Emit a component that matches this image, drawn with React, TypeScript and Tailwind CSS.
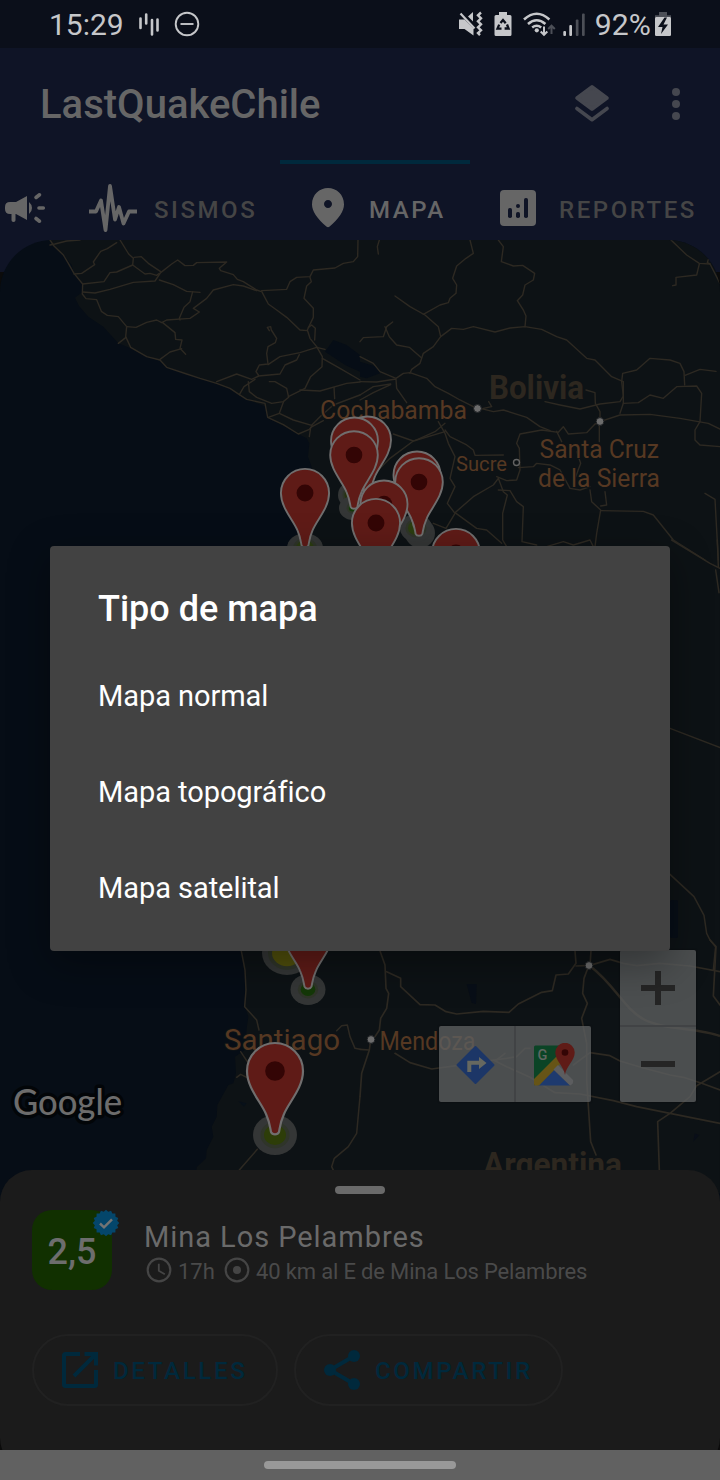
import React from "react";

const ROADS_NW = [
  "150 45 165 42 200 33 240 30",
  "150 30 162 48 190 75 205 100 222 130 248 162 247 192 258 206 290 209 304 244 322 256 355 260 380 290 377 320 392 352 440 380 480 390 500 412 560 432 600 445 650 460 690 475 718 494 740 508 795 520 803 562 850 584 895 612 928 598 937 588",
  "222 132 245 130 284 104 280 96 302 64 322 56 350 38",
  "248 162 312 155 330 128 350 126 398 105 400 85 386 72 360 30",
  "398 105 435 132 450 130 470 136 478 130",
  "402 82 424 80 445 100 482 125",
  "248 186 285 189 330 178 400 157 465 153 482 128 515 102 533 90 555 107 580 106 590 98 680 96 658 115 662 122 700 134 712 148 730 155 770 180 782 184",
  "478 150 520 164 560 184 600 187",
  "578 185 570 215 552 232 538 265 540 270",
  "380 290 408 292 440 277 470 270 485 278 500 270 570 265 598 246 580 235 620 205 640 180 700 164 730 168 770 182",
  "488 278 525 308 527 328 546 330 540 355 557 373",
  "480 388 510 366 545 356",
  "355 340 378 322",
  "785 184 805 222 830 240 860 262 900 300 922 302",
  "785 182 860 178 870 155 890 142 930 140 940 120 1005 114 1030 100 1060 95 1073 80 1074 30",
  "930 142 934 155 920 168 912 205 940 235 940 262 922 300 930 325 950 350 967 380 966 410 932 440 915 475 865 500",
  "925 292 935 285 946 295 944 330",
  "808 302 802 292 812 290 814 300 830 325 826 338 804 350 800 370 804 402 778 405 768 425 776 436",
  "804 404 840 380 900 368 950 352 975 358",
  "775 438 840 432 855 405 890 390 898 374",
  "650 455 710 432 755 448 776 438",
  "718 494 732 470 765 448",
  "745 455 748 485 770 502 815 520 850 515 866 502 860 475 825 455 808 455",
  "850 517 838 550 805 562",
  "838 550 880 570 935 586 960 560 1000 525 1080 495",
  "900 480 960 483 1040 460 1080 456",
  "1002 472 1004 506",
  "967 385 1020 415 1080 450",
  "928 620 932 592 970 572",
];

const ROADS_NE = [
  "58 30 52 50 55 72",
  "330 30 340 70 318 85 290 108 278 145 290 165 288 190 270 205 265 218 240 225 190 253",
  "415 30 430 50 424 95 460 108 488 106 524 130 520 150 495 165 488 195 472 212 490 240 498 258 495 290",
  "105 198 150 230 195 255 235 290 242 320",
  "0 335 10 323 70 320 80 290 98 276",
  "75 290 88 320 110 345 148 352 184 383",
  "150 430 155 418 180 400 190 370 220 350 242 320 275 295 310 298 340 290 405 306 450 294 495 290 545 298 590 320 620 330 680 385 705 390 755 440 790 455",
  "0 380 40 400 60 425 108 445 130 430 150 428 200 445 225 470 265 490 300 510 340 530",
  "0 455 50 456 108 447 110 475 140 518",
  "0 495 40 470 92 462",
  "0 510 40 488 92 464",
  "340 530 400 545 430 540 500 562 540 590 570 602",
  "386 515 395 530 370 535",
  "678 480 705 488 706 520 720 545 720 565",
  "555 515 600 525 660 537 720 522 780 515 790 498 785 455 788 430 830 420 870 385 930 390 960 400 972 425 974 465",
  "975 436 1020 418 1068 424",
  "790 520 835 518 870 495 910 505 950 470 1010 468 1025 490 1020 575 1005 600 1005 630 1020 645 1080 650",
  "720 575 780 555 870 553 960 565 1015 575 1045 580 1080 597",
  "790 455 790 520 780 550",
  "720 578 705 582 680 608 625 612 610 590 595 607 545 600 480 612 470 640 478 655 480 720 470 750 440 752 410 740",
  "475 713 520 710 530 700 570 705 600 720 630 775 660 780 690 770",
  "718 585 718 635",
  "590 604 605 635",
  "255 600 270 620 320 645 340 660 345 676 430 675",
  "255 605 160 633 90 685 55 720",
  "100 612 160 633",
  "235 575 255 610 265 640 285 680 270 745 285 770 262 820 285 850 258 895 220 880",
  "255 580 225 605 165 632",
  "285 848 340 800 400 765 415 745 430 785 442 795 428 850 428 930 440 950",
  "285 848 350 895 380 900 425 940",
  "415 780 450 782 470 815 490 830 486 935 530 945",
  "640 760 662 700 650 665",
  "690 780 695 815 722 840 710 910 705 950",
  "735 785 740 825 722 828",
  "722 842 850 844 880 855 940 930 1035 990",
  "1035 790 1065 808 1075 990",
  "933 30 980 75 1018 100 1050 102 1080 160",
  "1018 102 1010 135 948 142 948 165 938 167",
  "1050 102 1042 98 1046 85",
  "560 950 610 935 640 945 690 930 700 950",
];

const ROADS_SW = [
  "724 33 735 90 738 150 734 200 770 240 777 270",
  "722 335 742 365",
  "710 412 722 403 740 412",
  "1010 272 1025 257 1042 255 1050 290 1065 325 1080 328",
  "1080 470 1070 580 1045 620 1003 655 995 680 1002 695",
  "718 690 772 628",
];

const ROADS_SE = [
  "60 33 75 75 78 145 86 160 80 205 62 235 58 270 45 290",
  "80 95 122 115 122 140 180 194 225 195 258 215 290 222 370 214 447 217 475 192 545 157 577 152 588 105 625 102 648 70 645 33",
  "648 78 690 76 693 33",
  "687 75 672 115 668 160 682 190 665 235 680 310 680 420 692 605 708 645",
  "690 76 750 58 790 70 830 77 900 70 990 78 1080 95",
  "0 328 28 330 5 400 0 470",
  "28 330 32 300",
  "105 340 150 368 215 387 290 377 400 360 440 355 470 350 495 325 510 325",
  "400 360 440 380 510 412 585 458 660 462 760 482 830 500 930 520 1080 550",
  "410 360 435 340",
  "640 375 690 338 750 347 780 363 850 384 930 405 970 412 1025 430 1080 450",
  "1080 395 1010 437 990 470 930 520 893 545 898 690",
  "1050 0 1068 20 1060 168 1080 195",
];

const ROADS_EAST = [
  "65 0 180 70 210 85",
  "202 0 205 80",
  "197 90 207 158",
  "60 565 210 623",
  "60 1003 132 1070 162 1126 170 1180 180 1200 197 1220 190 1290",
];

const WATER_N = [
  "975 365 1000 330 1040 345 1080 375 1080 425 1035 405 1005 385",
  "1080 395 1130 410 1140 430 1100 445 1080 440",
];

interface PinData {
  x: number;
  y: number;
  s: number;
}

const PINS: PinData[] = [
  { x: 305, y: 493, s: 0.86 },
  { x: 367.5, y: 440, s: 0.84 },
  { x: 354.5, y: 441, s: 0.84 },
  { x: 354, y: 455, s: 0.85 },
  { x: 417, y: 475, s: 0.84 },
  { x: 419, y: 482, s: 0.85 },
  { x: 384, y: 504, s: 0.84 },
  { x: 376, y: 523, s: 0.86 },
  { x: 456, y: 553, s: 0.86 },
  { x: 308, y: 933, s: 0.88 },
  { x: 275, y: 1071, s: 1 },
];

function Roads({ lines, x, y, width = 4.2 }: { lines: string[]; x: number; y: number; width?: number }) {
  return (
    <g transform={`translate(${x} ${y}) scale(0.33333)`} fill="none" stroke="#2d2922" strokeWidth={width} strokeLinejoin="round" strokeLinecap="round">
      {lines.map((p) => (
        <polyline key={p} points={p} />
      ))}
    </g>
  );
}

function Halo({ x, y, rx, ry, core, k = 0.5 }: { x: number; y: number; rx: number; ry: number; core: string; k?: number }) {
  return (
    <g>
      <ellipse cx={x} cy={y} rx={rx} ry={ry} fill="#343636" />
      <ellipse cx={x} cy={y} rx={rx * (k + 0.16)} ry={ry * (k + 0.16)} fill="#2f3529" />
      <ellipse cx={x} cy={y} rx={rx * k} ry={ry * k} fill={core} />
    </g>
  );
}

function Pin({ x, y, s }: PinData) {
  return (
    <g transform={`translate(${x} ${y}) scale(${s})`}>
      <path
        d="M-28 0A28 28 0 0 1 28 0C28 17 14 31 9 43C5 52 5 56 4 61Q3 63.3 0 63.3Q-3 63.3 -4 61C-5 56 -5 52 -9 43C-14 31 -28 17 -28 0Z"
        fill="#5f1b17"
        stroke="#706e6e"
        strokeWidth="2.200"
      />
      <circle r="9.8" fill="#330505" />
    </g>
  );
}

function CityDot({ x, y }: { x: number; y: number }) {
  return <circle cx={x} cy={y} r="3.9" fill="#6c6c6c" stroke="#1d2023" strokeWidth="1" />;
}

function MapCanvas() {
  return (
    <svg className="block h-[1210px] w-[720px]" viewBox="0 240 720 1210" fontFamily="Roboto, 'Liberation Sans', sans-serif">
      <rect y="240" width="720" height="1210" fill="#060d16" />
      <g transform="translate(0 230) scale(0.33333)" fill="#0d1215">
        <polygon points="150,30 165,55 190,75 215,105 222,130 248,160 248,185 225,203 237,228 265,260 310,290 355,340 390,354 440,380 480,392 505,414 570,434 650,462 690,477 720,497 750,512 798,530 805,565 850,588 895,613 920,625 928,640 924,680 935,710 930,760 940,2160 2160,2160 2160,30" />
        <g fill="#060d16">
          {WATER_N.map((p) => (
            <polygon key={p} points={p} />
          ))}
        </g>
      </g>
      <g transform="translate(0 940) scale(0.33333)" fill="#0d1215">
        <polygon points="722,0 735,100 735,200 745,230 740,265 735,330 705,350 708,400 700,430 685,435 652,495 650,530 635,560 640,590 620,630 618,655 590,682 585,760 2160,760 2160,0" />
        <polygon points="715,484 740,490 732,500" fill="#081019" />
        <polygon points="1400,132 1430,132 1428,192 1415,188" fill="#080e17" />
        <polygon points="2084,580 2098,585 2080,605" fill="#090e18" />
      </g>
      <rect x="670" y="900" width="8" height="38" rx="2" fill="#070e17" />
      <Roads lines={ROADS_NW} x={0} y={230} />
      <Roads lines={ROADS_NE} x={360} y={230} />
      <Roads lines={ROADS_SW} x={0} y={940} width={4.5} />
      <Roads lines={ROADS_SE} x={360} y={940} width={5} />
      <Roads lines={ROADS_EAST} x={650} y={540} width={4.5} />
      <path d="M590 966C615 985 625 1010 645 1020S700 1028 720 1036" fill="none" stroke="#2d2922" strokeWidth="2.500" />

      <g fill="#563822" stroke="#0d1215" strokeWidth="2" paintOrder="stroke">
        <text x="320" y="419" fontSize="26" textLength="147" lengthAdjust="spacingAndGlyphs">Cochabamba</text>
        <text x="456" y="471" fontSize="20.500" textLength="51" lengthAdjust="spacingAndGlyphs">Sucre</text>
        <text x="539.500" y="458" fontSize="26" textLength="119.500" lengthAdjust="spacingAndGlyphs">Santa Cruz</text>
        <text x="538" y="487" fontSize="26" textLength="122" lengthAdjust="spacingAndGlyphs">de la Sierra</text>
        <text x="224" y="1049.500" fontSize="30" textLength="116" lengthAdjust="spacingAndGlyphs">Santiago</text>
        <text x="379.500" y="1050" fontSize="25" textLength="96" lengthAdjust="spacingAndGlyphs">Mendoza</text>
      </g>
      <g fill="#2d271f" stroke="#0d1215" strokeWidth="2" paintOrder="stroke" fontWeight="700">
        <text x="489" y="399" fontSize="34" textLength="95" lengthAdjust="spacingAndGlyphs">Bolivia</text>
        <text x="483" y="1176" fontSize="34" textLength="139" lengthAdjust="spacingAndGlyphs">Argentina</text>
      </g>
      <CityDot x={477.5} y={408.5} />
      <CityDot x={600} y={421.5} />
      <CityDot x={589} y={965.5} />
      <CityDot x={371} y={1039.5} />
      <circle cx="516.500" cy="462.500" r="3" fill="#0d1215" stroke="#626262" strokeWidth="1.400" />

      <Halo x={305} y={548} rx={18} ry={15} core="#2b3d10" />
      <Halo x={351} y={495} rx={13} ry={13} core="#26340f" />
      <Halo x={353} y={508} rx={14} ry={12} core="#123a08" k={0.3} />
      <Halo x={420} y={533} rx={15} ry={15} core="#2b3d10" k={0.3} />
      <Halo x={416} y={528} rx={16} ry={14} core="#2b3d10" />
      <Halo x={287} y={953} rx={25} ry={22} core="#504f0b" k={0.6} />
      <Halo x={308} y={989.5} rx={17.5} ry={15.5} core="#143808" k={0.42} />
      <Halo x={275} y={1135} rx={22} ry={20} core="#2d3d08" />
      {PINS.map((p) => (
        <Pin key={`${p.x}-${p.y}`} {...p} />
      ))}

      <text
        x="13"
        y="1115"
        fontFamily="Lato, Roboto, sans-serif"
        fontSize="36"
        fontWeight="500"
        textLength="109"
        lengthAdjust="spacingAndGlyphs"
        fill="#6c6c6c"
        stroke="#020508"
        strokeWidth="7"
        strokeLinejoin="round"
        paintOrder="stroke"
      >
        Google
      </text>
    </svg>
  );
}

function StatusBar() {
  return (
    <div className="flex h-12 items-center bg-[#0b0f1a] pl-[49px] pr-[48px] text-[#c6c7ca]">
      <span className="w-[75px] whitespace-nowrap pt-px text-[30px] leading-none">15:29</span>
      <svg className="ml-[14px] h-6 w-[22px]" viewBox="0 0 22 24" stroke="currentColor" strokeWidth="2.600" strokeLinecap="round">
        <path d="M2.500 6.500V16M8.200 2.500V11.500M14 8v14.500M19.500 7.500v11" />
      </svg>
      <svg className="ml-[14px] h-[26px] w-[26px]" viewBox="0 0 26 26" fill="none" stroke="currentColor" strokeWidth="1.900">
        <circle cx="13" cy="13" r="11.300" />
        <path d="M6.500 13h13" />
      </svg>
      <div className="flex-1" />
      <svg className="h-12 w-[222px] shrink-0" viewBox="450 0 222 48" fill="currentColor">
        <path d="M459 19.500h5.500l9 9v7l-9-6.500h-5.500Z" />
        <path d="M468 16.500l5-4.500v9.500Z" />
        <path d="M460.500 13.500l14 15" stroke="currentColor" strokeWidth="2.200" />
        <path d="M481 12.500l-3 2.800 3 3-3 3 3 3-3 3 3 3-3 2.800 2 2" fill="none" stroke="currentColor" strokeWidth="2.400" />
        <path d="M499 12h8v3h3q1.500 0 1.500 1.500v18q0 1.500-1.500 1.500h-14q-1.500 0-1.500-1.500v-18q0-1.500 1.500-1.500h3Z" />
        <g fill="none" stroke="#0b0f1a" strokeWidth="2.300">
          <path d="M500.500 23l2.500-3 2.700 3.300M507 24.500l1.600 4h-4M501.500 28.600h-4l1.700-4" />
        </g>
        <g fill="none" stroke="currentColor" strokeWidth="2.600">
          <path d="M524 19.500Q536.700 8 549.400 19.500" />
          <path d="M528 24Q536.700 16.500 545.400 24" />
          <path d="M532.200 27.500Q536.700 24 541.200 27.500" />
        </g>
        <circle cx="536.800" cy="30.300" r="2.100" />
        <path d="M544 26.500v8M540.700 31.500l3.300 3.300 3.300-3.300" fill="none" stroke="currentColor" strokeWidth="2" />
        <path d="M551.500 34v-8M548.200 29l3.300-3.300 3.300 3.300" fill="none" stroke="#4c4f57" strokeWidth="2" />
        <rect x="563.300" y="31" width="2.700" height="5" rx="1" />
        <rect x="569.300" y="25" width="2.700" height="11" rx="1" />
        <rect x="575.800" y="19.500" width="2.700" height="16.500" rx="1" fill="#4c4f57" />
        <rect x="582" y="13.500" width="2.700" height="22.500" rx="1" fill="#4c4f57" />
        <text x="594.800" y="34.500" fontSize="29.500" textLength="56" lengthAdjust="spacingAndGlyphs" fontFamily="Roboto, sans-serif">92%</text>
        <path d="M659 12h8v3.200h4v2h-16v-2h4Z" fill="#4c4f57" />
        <rect x="655" y="17" width="16" height="19" rx="1.200" />
        <path d="M664.500 17.500L658 27h4.500l-1.500 7 7-9.500h-4.500l3.500-7Z" fill="#0b0f1a" />
      </svg>
    </div>
  );
}

function AppBar() {
  return (
    <header className="flex h-28 items-center pl-10 pr-5">
      <h1 className="flex-1 pt-0.5 text-[40px] font-medium leading-none tracking-[0px] text-[#666]">LastQuakeChile</h1>
      <svg className="h-12 w-12" viewBox="0 0 48 48" fill="#45474f">
        <path d="M24 7L38.800 18 24 29 9.200 18Z" stroke="#45474f" strokeWidth="4" strokeLinejoin="round" />
        <path d="M8.900 28.500L24 39.700 39.100 28.500" fill="none" stroke="#45474f" strokeWidth="3.600" strokeLinecap="round" strokeLinejoin="round" />
      </svg>
      <svg className="ml-9 h-12 w-12" viewBox="0 0 48 48" fill="#45474f">
        <circle cx="24" cy="12" r="4" />
        <circle cx="24" cy="24" r="4" />
        <circle cx="24" cy="36" r="4" />
      </svg>
    </header>
  );
}

function Tabs() {
  return (
    <nav className="flex h-20 w-[720px] overflow-hidden text-2xl font-medium leading-none tracking-[2.550px] text-[#454545]">
      <div className="flex w-[65px] shrink-0 items-center pt-4">
        <svg className="ml-px h-12 w-12" viewBox="0 0 48 48" fill="#666">
          <path d="M9 18h6l11-6v24l-11-6h-.500v6.200q0 1.800-2 1.800t-2-1.800V30H9q-5 0-5-5v-2q0-5 5-5Z" />
          <path d="M28 18q3 2.500 3 6T28 30Z" />
          <path d="M35 13.500l3.500-2.700M38 24h4.300M35 34.500l3.500 2.700" fill="none" stroke="#666" strokeWidth="3.600" strokeLinecap="round" />
        </svg>
      </div>
      <div className="flex w-[215px] shrink-0 items-center gap-[17px] pl-6 pt-[16px]">
        <svg className="h-12 w-12" viewBox="0 0 48 48" fill="none" stroke="#666" strokeWidth="3.800" strokeLinejoin="round">
          <path d="M0 27.500h7l5-11 4.500 29.500L21 2l5 33.500 4-12.500 4.500 16.500L40 27.500h8" />
        </svg>
        <span className="pt-[3px]">SISMOS</span>
      </div>
      <div className="flex w-[190px] shrink-0 flex-col text-[#666]">
        <div className="h-1 bg-[#00293c]" />
        <div className="flex flex-1 items-center gap-[17px] pl-6 pt-[12px]">
          <svg className="h-12 w-12" viewBox="0 0 24 24" fill="currentColor">
            <path d="M12 2c-4.200 0-8 3.220-8 8.200 0 3.180 2.450 6.920 7.340 11.230.38.330.95.330 1.330 0C17.550 17.120 20 13.380 20 10.200 20 5.220 16.200 2 12 2zm0 10c-1.100 0-2-.9-2-2s.9-2 2-2 2 .9 2 2-.9 2-2 2z" />
          </svg>
          <span className="pt-[3px]">MAPA</span>
        </div>
      </div>
      <div className="flex w-[250px] shrink-0 items-center gap-[17px] pl-6 pt-[16px]">
        <svg className="h-12 w-12" viewBox="0 0 48 48">
          <rect x="6" y="6" width="36" height="36" rx="4" fill="#666" />
          <g fill="#0f1426">
            <rect x="14" y="24" width="4" height="10" rx="1.800" />
            <rect x="30" y="14" width="4" height="20" rx="1.800" />
            <rect x="22" y="28" width="4" height="6" rx="1.800" />
            <circle cx="24" cy="22" r="2" />
          </g>
        </svg>
        <span className="pt-[3px]">REPORTES</span>
      </div>
    </nav>
  );
}

function MapControls() {
  return (
    <>
      <div className="absolute left-[439px] top-[786px] flex h-[76px] w-[152px] rounded-[2px] bg-[#5e6062]/77 shadow-[0_0_2px_#0008]">
        <div className="flex w-[77px] items-center justify-center border-r-2 border-[#414345] pr-[3px] pt-0.5">
          <svg className="h-10 w-10" viewBox="0 0 40 40">
            <path d="M20.500 2L38.500 20 20.500 38 2.500 20Z" fill="#1c3667" stroke="#1c3667" strokeWidth="2" strokeLinejoin="round" />
            <path d="M14.300 27v-9.200h12" fill="none" stroke="#666860" strokeWidth="4" />
            <path d="M24 12l7.500 6-7.500 6Z" fill="#666860" />
          </svg>
        </div>
        <div className="flex w-[75px] items-center justify-center pt-0.5">
          <svg className="mr-px h-11 w-11" viewBox="0 0 44 44">
            <path d="M4.500 2.500h30L3 42.500V4Q3 2.500 4.500 2.500Z" fill="#0b4426" />
            <path d="M22.500 26.500L39 42.500H6.500Z" fill="#1e3a6e" />
            <path d="M3 36L29 10l4 7-25 25.500H4.500Q3 42.500 3 41Z" fill="#665416" />
            <path d="M22.500 26.500l4.500-4.500 15 15q1 4-3 5.500Z" fill="#5c5d5f" />
            <path d="M36 32C35 23 26.300 18 26.300 9.500a9.500 9.500 0 0 1 19.400 0C45.700 18 37 23 36 32Z" fill="#5f1b17" transform="translate(-2 0)" />
            <circle cx="34" cy="9.500" r="3.300" fill="#330505" />
            <text x="6.500" y="16.500" fontSize="14.500" fontWeight="500" fill="#606660" fontFamily="Roboto, sans-serif">G</text>
          </svg>
        </div>
      </div>
      <div className="absolute left-[620px] top-[710px] flex h-[152px] w-[76px] flex-col rounded-[2px] bg-[#5e6062]/77 shadow-[0_0_2px_#0008]">
        <div className="flex h-[77px] items-center justify-center border-b-2 border-[#414345] pt-px">
          <svg className="h-9 w-9" viewBox="0 0 36 36" fill="#252525">
            <path d="M15 1h6v14h14v6H21v14h-6V21H1v-6h14Z" />
          </svg>
        </div>
        <div className="flex h-[75px] items-center justify-center pb-px">
          <div className="h-[6px] w-[34px] bg-[#252525]" />
        </div>
      </div>
    </>
  );
}

const SEAL = Array.from({ length: 32 }, (_, i) => {
  const r = i % 2 === 0 ? 13.3 : 11.4;
  const a = (i * Math.PI) / 16;
  return `${(14 + r * Math.cos(a)).toFixed(2)},${(14 + r * Math.sin(a)).toFixed(2)}`;
}).join(" ");

function QuakeSheet() {
  return (
    <section className="z-10 col-start-1 row-start-1 mt-[930px] flex h-[300px] flex-col rounded-[32px] bg-[#1b1b1b] pt-4">
      <div className="mx-auto h-2 w-[50px] rounded-full bg-[#6a6a6a]" />
      <div className="mt-4 flex pl-8">
        <div className="relative flex h-20 w-20 items-center justify-center rounded-[20px] bg-[#113000] pt-1 text-[36px] font-medium leading-none text-[#6d6d6d]">
          2,5
          <svg className="absolute -right-[8px] -top-px h-7 w-7" viewBox="0 0 28 28">
            <polygon points={SEAL} fill="#04466b" />
            <path d="M8 14.500l4 3.800 8-8" fill="none" stroke="#747474" strokeWidth="2.500" />
          </svg>
        </div>
        <div className="flex flex-col pl-8 pt-3">
          <div className="h-[30px] whitespace-nowrap text-[29px] leading-[30px] tracking-[0.950px] text-[#6a6a6a]">Mina Los Pelambres</div>
          <div className="mt-[5px] flex h-[26px] items-center whitespace-nowrap text-[22px] leading-none text-[#4a4a4a]">
            <svg className="ml-[2px] h-[26px] w-[26px]" viewBox="0 0 26 26" fill="none" stroke="#454545" strokeWidth="2.200">
              <circle cx="13" cy="13" r="11.300" />
              <path d="M12.800 6.800v7l6 3.500" strokeWidth="1.800" />
            </svg>
            <span className="ml-[6px] w-[36px] pt-[3px]">17h</span>
            <svg className="ml-[10px] h-[26px] w-[26px]" viewBox="0 0 26 26" fill="none" stroke="#454545" strokeWidth="2.200">
              <circle cx="13" cy="13" r="11.300" />
              <circle cx="13" cy="13" r="4" fill="#454545" stroke="none" />
            </svg>
            <span className="ml-[6px] pt-[3px] tracking-[-0.160px]">40 km al E de Mina Los Pelambres</span>
          </div>
        </div>
      </div>
      <div className="mt-[44px] flex gap-4 pl-8 text-2xl font-medium leading-none tracking-[2.700px] text-[#00293c]">
        <div className="flex h-[72px] w-[246px] items-center rounded-full border-2 border-[#212121] pl-[28px]">
          <svg className="h-9 w-9" viewBox="0 0 36 36" fill="none" stroke="currentColor" strokeWidth="4">
            <path d="M18 2H3.500Q2 2 2 3.500v29Q2 34 3.500 34h29Q34 34 34 32.500V18" />
            <path d="M22.500 2H34V13.500M33.500 2.500L12 24" />
          </svg>
          <span className="ml-[15px] pt-px">DETALLES</span>
        </div>
        <div className="flex h-[72px] w-[269px] items-center rounded-full border-2 border-[#212121] pl-[28px]">
          <svg className="h-10 w-[38px]" viewBox="0 0 38 40" fill="currentColor">
            <path d="M6 20L30 6M6 20l24 14" stroke="currentColor" strokeWidth="4" />
            <circle cx="6" cy="20" r="6" />
            <circle cx="30" cy="6" r="6" />
            <circle cx="30" cy="34" r="6" />
          </svg>
          <span className="ml-[13px] pt-px">COMPARTIR</span>
        </div>
      </div>
    </section>
  );
}

const MAP_TYPES = ["Mapa normal", "Mapa topográfico", "Mapa satelital"];

function MapTypeDialog() {
  return (
    <div className="absolute inset-0 z-20 flex flex-col items-center pt-[546px]" role="dialog">
      <div className="flex h-[405px] w-[620px] flex-col rounded-[4px] bg-[#424242] px-12 text-white shadow-[0_12px_40px_rgba(0,0,0,0.35)]">
        <h2 className="flex h-[102px] items-center pt-[24px] text-[36px] font-medium leading-none">Tipo de mapa</h2>
        {MAP_TYPES.map((t) => (
          <div key={t} className="flex h-24 items-center text-[29px] leading-none tracking-[-0.060px]">
            {t}
          </div>
        ))}
      </div>
    </div>
  );
}

export default function App() {
  return (
    <div className="relative flex h-[1480px] w-[720px] flex-col overflow-hidden bg-[#0f1426] font-['Roboto','Liberation_Sans',sans-serif]">
      <StatusBar />
      <AppBar />
      <Tabs />
      <main className="grid h-[1210px] shrink-0 overflow-hidden bg-[linear-gradient(#0f1426_32px,#0b0b0b_32px)]">
        <div className="relative col-start-1 row-start-1 h-[1210px] overflow-hidden rounded-[52px]">
          <MapCanvas />
          <MapControls />
        </div>
        <QuakeSheet />
      </main>
      <footer className="flex h-[30px] shrink-0 items-center justify-center bg-[#616161]">
        <div className="h-2 w-48 rounded-full bg-[#999]" />
      </footer>
      <MapTypeDialog />
    </div>
  );
}
